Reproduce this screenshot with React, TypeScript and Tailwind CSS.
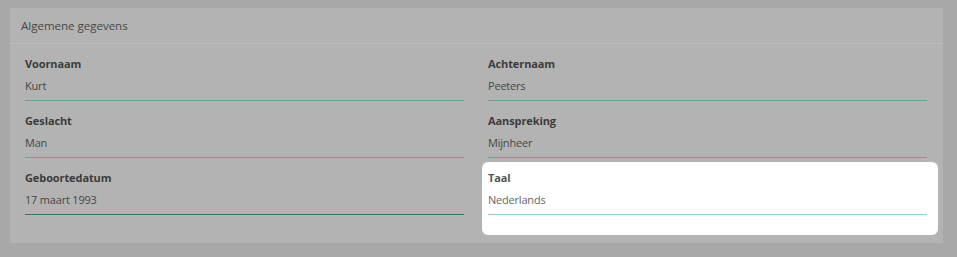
import React from "react";

type F = { label: string; value: string; line: string; hl?: boolean };

const fields: F[] = [
  { label: "Voornaam", value: "Kurt", line: "border-b border-b-[#6aa592]" },
  { label: "Achternaam", value: "Peeters", line: "border-b border-b-[#6aa592]" },
  { label: "Geslacht", value: "Man", line: "border-b border-b-[#6aa592]" },
  { label: "Aanspreking", value: "Mijnheer", line: "border-b border-b-[#6aa592]" },
  { label: "Geboortedatum", value: "17 maart 1993", line: "border-b border-b-[#2f7a5c]" },
  { label: "Taal", value: "Nederlands", line: "border-b border-b-[#8fd3c1]", hl: true },
];

function Field({ f }: { f: F }) {
  const wrap = f.hl
    ? "bg-white rounded-[6px] -mt-[8px] -mb-[20px] -ml-[6px] -mr-[11px] pt-[8px] pb-[20px] pl-[6px] pr-[11px]"
    : "";
  const labelCls = f.hl
    ? "h-[16px] text-[11px] leading-[16px] font-bold tracking-[-0.1px] text-[#555555]"
    : "h-[16px] text-[11px] leading-[16px] font-bold tracking-[-0.1px] text-[#3c3c3c]";
  const valueCls = f.hl
    ? "mt-[6px] h-[23px] pb-[6px] text-[11px] leading-[16px] tracking-[-0.2px] text-[#666666]"
    : "mt-[6px] h-[23px] pb-[6px] text-[11px] leading-[16px] tracking-[-0.2px] text-[#474747]";
  return (
    <div className={wrap}>
      <div className={labelCls}>{f.label}</div>
      <div className={valueCls + " " + f.line}>{f.value}</div>
    </div>
  );
}

export default function App() {
  return (
    <div
      className="w-[957px] h-[257px] bg-[#a8a8a8] pt-[8px] pl-[10px] overflow-hidden"
      style={{ fontFamily: '"Open Sans", "Liberation Sans", sans-serif' }}
    >
      <div className="w-[933px] bg-[#b3b3b3]">
        <div className="h-[36px] box-border border-b border-b-[#bcbcbc] flex items-center pl-[11px] text-[11.5px] text-[#474747]">
          Algemene gegevens
        </div>
        <div className="grid grid-cols-2 gap-x-[24px] gap-y-[12px] pl-[15px] pr-[16px] pt-[12px] pb-[28px]">
          {fields.map((f) => (
            <Field key={f.label} f={f} />
          ))}
        </div>
      </div>
    </div>
  );
}
